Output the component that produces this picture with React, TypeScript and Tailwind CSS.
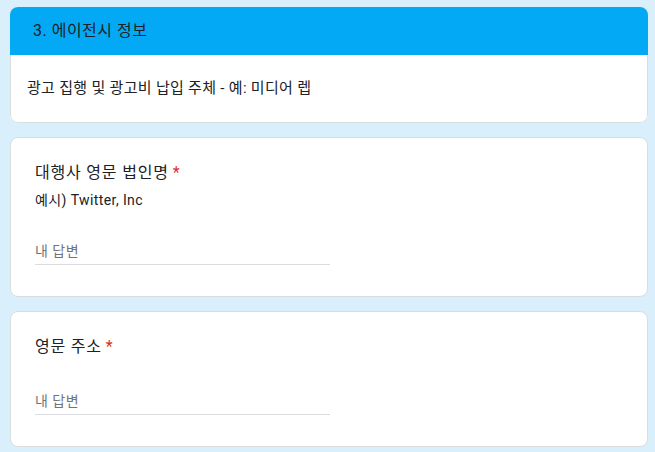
const font = "font-['Roboto','Noto_Sans_CJK_KR',sans-serif]";

function Question({ title, hint }: { title: string; hint?: string }) {
  return (
    <div className="rounded-lg border border-[#dadce0] bg-white px-6 pt-[23px] pb-[31px]">
      <div className="text-base leading-6 tracking-[0.8px] text-[#202124]">
        {title}
        <span className="ml-1 text-[#d93025]">*</span>
      </div>
      {hint && (
        <div className="mt-[5px] text-sm leading-5 tracking-[0.4px] text-[#202124]">{hint}</div>
      )}
      <div
        className={`${hint ? "mt-[31px]" : "mt-[32px]"} w-[295px] border-b border-[#dadce0] pb-[3px] text-sm leading-5 tracking-[0.5px] text-[#70757a]`}
      >
        내 답변
      </div>
    </div>
  );
}

export default function App() {
  return (
    <div className={`${font} min-h-[452px] w-full bg-[#d9effc] pt-[7px] pr-[7px] pb-4 pl-[10px]`}>
      <div className="flex flex-col gap-[14px]">
        <div className="overflow-hidden rounded-lg bg-white">
          <div className="flex h-[48px] items-center bg-[#03a9f4] px-[23px] text-base tracking-[0.5px] text-[#202124]">
            3. 에이전시 정보
          </div>
          <div className="flex h-[68px] items-center rounded-b-lg border-x border-b border-[#dadce0] px-4 text-[15px] tracking-[0.3px] text-[#202124]">
            광고 집행 및 광고비 납입 주체 - 예: 미디어 렙
          </div>
        </div>
        <Question title="대행사 영문 법인명" hint="예시) Twitter, Inc" />
        <Question title="영문 주소" />
      </div>
    </div>
  );
}
